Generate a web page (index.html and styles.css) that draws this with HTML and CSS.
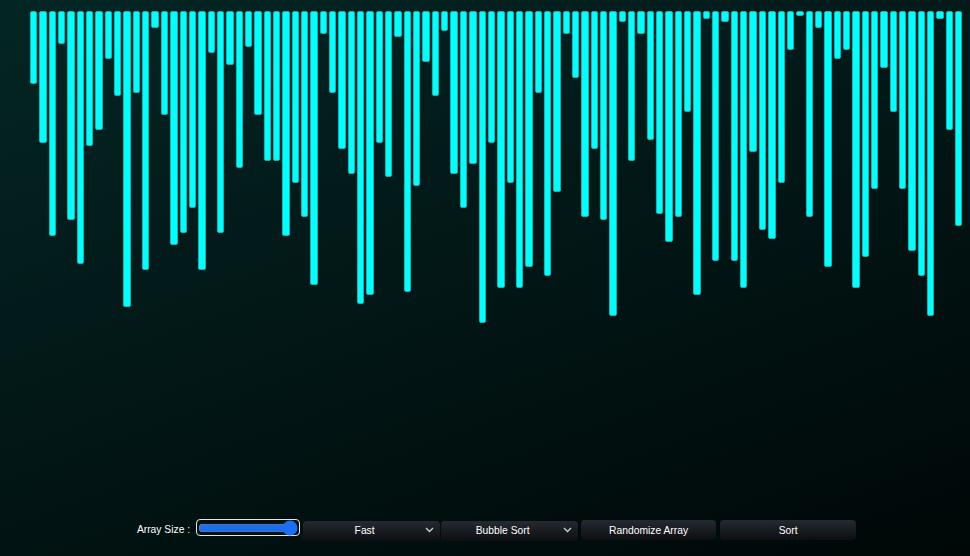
FILE: index.html
```html
<!DOCTYPE html>
<html lang="en">
<head>
  <meta charset="UTF-8">
  <title>Sorting Visualizer</title>
  <link rel="stylesheet" href="styles.css">
</head>
<body>
<div class="visualizer">
  <div class="bars" id="bars"></div>
  <div class="controls">
    <label class="size-label" for="size">Array Size :</label>
    <span class="range-box"><input type="range" id="size" class="size-range" min="5" max="100" value="100"></span>
    <div class="select-wrap">
      <select class="ctl" id="speed">
        <option>Fast</option>
        <option>Medium</option>
        <option>Slow</option>
      </select>
      <svg class="chevron" width="9" height="6" viewBox="0 0 9 6"><path d="M1 1l3.5 3.5L8 1" fill="none" stroke="#ccc" stroke-width="1.4"/></svg>
    </div>
    <div class="select-wrap algo-wrap">
      <select class="ctl" id="algo">
        <option>Bubble Sort</option>
        <option>Selection Sort</option>
        <option>Insertion Sort</option>
        <option>Merge Sort</option>
        <option>Quick Sort</option>
      </select>
      <svg class="chevron" width="9" height="6" viewBox="0 0 9 6"><path d="M1 1l3.5 3.5L8 1" fill="none" stroke="#ccc" stroke-width="1.4"/></svg>
    </div>
    <button class="ctl btn" id="randomize">Randomize Array</button>
    <button class="ctl btn" id="sort">Sort</button>
  </div>
</div>

<script>
  const values = [23,42,72,10,67,81,43,38,15,27,95,26,83,5,33,75,71,63,83,13,
    71,17,50,11,33,48,48,72,55,66,88,7,26,44,52,94,91,42,53,8,
    90,56,16,27,6,52,63,49,100,42,89,55,89,82,26,85,58,7,21,66,
    44,67,98,3,48,7,41,65,74,66,32,91,2,80,3,80,89,45,70,73,
    55,12,1,66,5,82,15,12,89,79,57,18,32,57,77,85,98,2,38,69];

  const bars = document.getElementById('bars');

  function drawBars(arr) {
    bars.innerHTML = "";
    arr.forEach(v => {
      const bar = document.createElement('div');
      bar.className = 'bar';
      bar.style.height = (v * 3.1 + 1.5) + 'px';
      bars.appendChild(bar);
    });
  }

  drawBars(values);
</script>
</body>
</html>
```

FILE: styles.css
```css
html, body { margin: 0; height: 100%; }
body { font-family: "Liberation Sans", Arial, sans-serif; background: linear-gradient(160deg, #032624 0%, #021817 45%, #000707 100%); color: #fff; overflow: hidden; }
.visualizer { height: 100%; display: flex; flex-direction: column; }

.bars { flex: 1; display: flex; align-items: flex-start; margin: 11px 7px 0 29px; }
.bar { flex: 1; margin: 0 1px; box-sizing: border-box; background: #00ffff; border: 1px solid #10b5b2; border-radius: 2px; }

.controls { display: flex; align-items: flex-start; justify-content: center; padding: 0 0 16px 23px; height: 20px; }
.size-label { font-size: 10.3px; margin: 4px 6px 0 0; }
.range-box { display: flex; align-items: center; box-sizing: border-box; width: 104px; height: 17px; margin-top: -1px; padding: 0 1px; border: 1.5px solid #e6e6e6; border-radius: 4px; }
.size-range { width: 100%; height: 12px; margin: 0; accent-color: #1a6ef5; }

.select-wrap { position: relative; margin-left: 3px; }
.algo-wrap { margin-left: 1px; }
.chevron { position: absolute; right: 6px; top: 7px; pointer-events: none; }
.ctl { width: 137px; height: 20px; box-sizing: border-box; border: none; border-radius: 4px; background: linear-gradient(#252a31, #0c0e11); color: #fff; font-family: inherit; font-size: 10.3px; padding: 0 14px 0 0; text-align: center; text-align-last: center; appearance: none; -webkit-appearance: none; }
.btn { width: 135px; margin-left: 3px; padding: 0; }
#sort { width: 136px; margin-left: 4px; }
```
